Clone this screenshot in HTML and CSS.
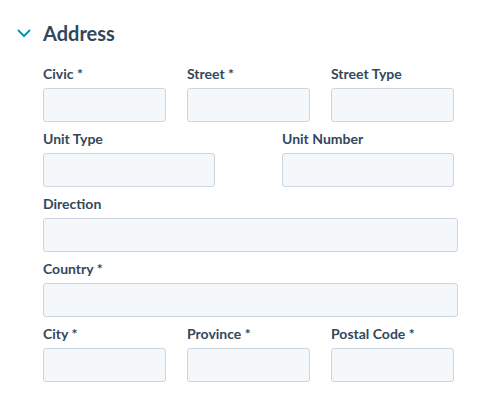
FILE: index.html
```html
<!DOCTYPE html>
<html lang="en">
<head>
  <meta charset="UTF-8">
  <title>Address</title>
  <link rel="stylesheet" href="styles.css">
</head>
<body>

  <section class="addressSection">
    <div class="sectionHeader">
      <svg class="chevron" width="14" height="9" viewBox="0 0 14 9">
        <path d="M1.5 1.5 L7 7 L12.5 1.5" fill="none" stroke="#0091ae" stroke-width="1.8" stroke-linecap="round" stroke-linejoin="round"/>
      </svg>
      <h2>Address</h2>
    </div>

    <div class="fields">
      <div class="row row3">
        <div class="field"><label>Civic *</label><input type="text"></div>
        <div class="field"><label>Street *</label><input type="text"></div>
        <div class="field"><label>Street Type</label><input type="text"></div>
      </div>
      <div class="row row2">
        <div class="field"><label>Unit Type</label><input type="text"></div>
        <div class="field"><label>Unit Number</label><input type="text"></div>
      </div>
      <div class="row full">
        <div class="field"><label>Direction</label><input type="text"></div>
      </div>
      <div class="row full">
        <div class="field"><label>Country *</label><input type="text"></div>
      </div>
      <div class="row row3">
        <div class="field"><label>City *</label><input type="text"></div>
        <div class="field"><label>Province *</label><input type="text"></div>
        <div class="field"><label>Postal Code *</label><input type="text"></div>
      </div>
    </div>
  </section>

</body>
</html>
```

FILE: styles.css
```css
body {
  margin: 0;
  padding: 0;
  background: #fff;
  font-family: "Lato", sans-serif;
  color: #33475b;
}
.addressSection {
  padding: 21px 0 0 17px;
}
.sectionHeader {
  display: flex;
  align-items: center;
  gap: 12px;
  height: 24px;
}
.chevron {
  display: block;
}
.sectionHeader h2 {
  margin: 0;
  font-size: 20px;
  font-weight: 700;
  line-height: 24px;
}
.fields {
  margin-left: 26px;
  margin-top: 20px;
  display: flex;
  flex-direction: column;
  gap: 8px;
}
.row {
  display: grid;
}
.row3 {
  grid-template-columns: repeat(3, 123px);
  column-gap: 21px;
}
.row2 {
  grid-template-columns: 172px 172px;
  column-gap: 67px;
}
.full {
  width: 415px;
}
.field {
  display: flex;
  flex-direction: column;
}
label {
  font-size: 14px;
  font-weight: 700;
  line-height: 18px;
  margin-bottom: 5px;
}
input {
  height: 34px;
  box-sizing: border-box;
  width: 100%;
  background: #f5f8fa;
  border: 1px solid #cbd6e2;
  border-radius: 3px;
  margin: 0;
  padding: 0 8px;
  font-family: inherit;
}
```
